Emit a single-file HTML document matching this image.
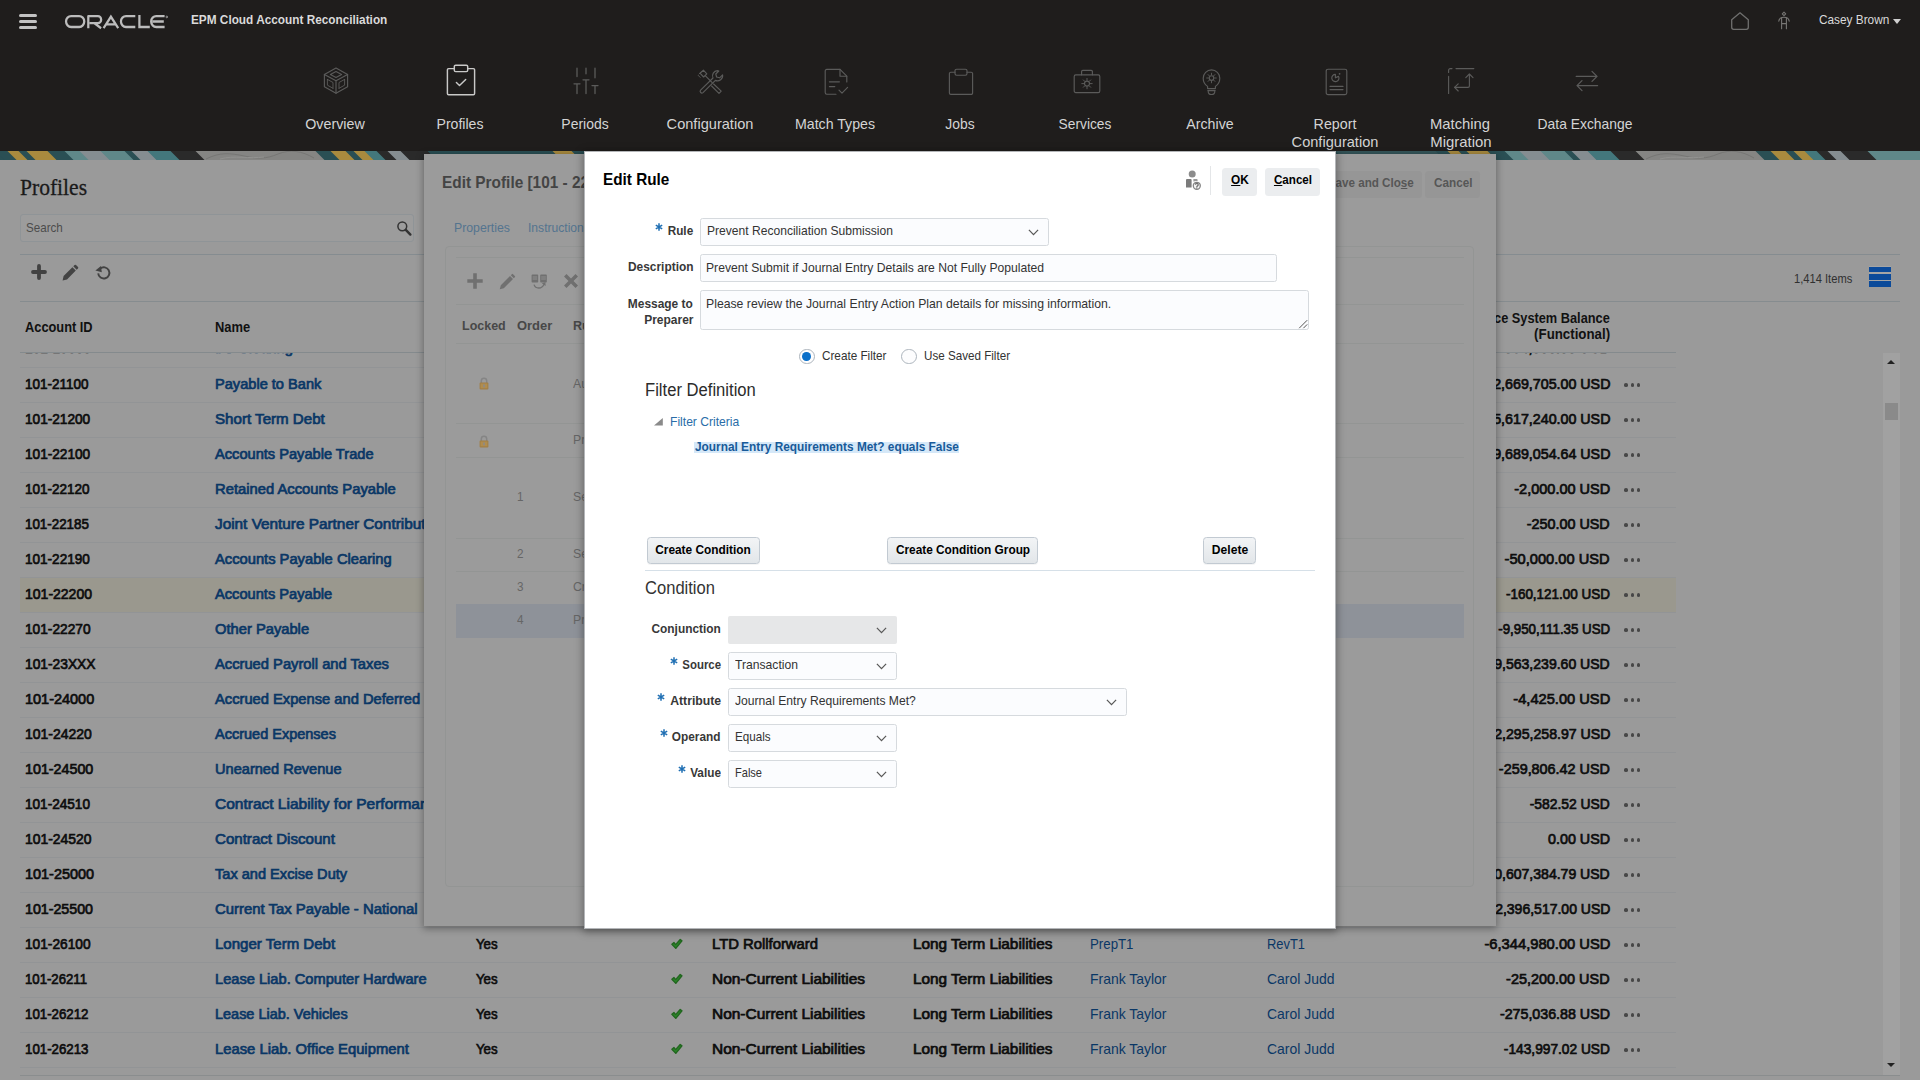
<!DOCTYPE html>
<html><head><meta charset="utf-8"><title>Edit Rule</title><style>
*{box-sizing:border-box;margin:0;padding:0}
html,body{width:1920px;height:1080px;overflow:hidden;background:#9a9a9a;font-family:"Liberation Sans",sans-serif;}
.t{position:absolute;white-space:nowrap;line-height:1;transform-origin:0 50%;}
.t.r{transform-origin:100% 50%;}
.t.c{transform-origin:50% 50%;transform:translateX(-50%);}
.b{position:absolute;}
svg{position:absolute;overflow:visible}
#hdr{position:absolute;left:0;top:0;width:1920px;height:151px;background:#1f1d1c;}
#strip{position:absolute;left:0;top:151px;width:1920px;height:9px;overflow:hidden;background:#7f8583;}
#ep{position:absolute;left:424px;top:154px;width:1072px;height:772px;background:#9b9b9b;box-shadow:0 2px 7px 1px rgba(0,0,0,.32);overflow:hidden}
#er{position:absolute;left:584px;top:151px;width:752px;height:778px;background:#fff;border:1px solid #b4b6b9;box-shadow:0 2px 8px 1px rgba(0,0,0,.35);overflow:hidden}
</style></head><body>
<div id="hdr"><div class="b" style="left:19.2px;top:13.9px;width:18px;height:3.1px;background:#c2c2c2;border-radius:1.5px;"></div>
<div class="b" style="left:19.2px;top:19.8px;width:18px;height:3.1px;background:#c2c2c2;border-radius:1.5px;"></div>
<div class="b" style="left:19.2px;top:25.8px;width:18px;height:3.1px;background:#c2c2c2;border-radius:1.5px;"></div>
<svg style="left:65px;top:15.1px" width="103" height="14" viewBox="0 0 103 13" preserveAspectRatio="none" fill="none" stroke="#bcbcbc" stroke-width="2.25">
<rect x="1.05" y="1.05" width="18.2" height="10.1" rx="5.05"></rect>
<path d="M23.3 12.2V1.05h9.6a3.25 3.25 0 0 1 0 6.5h-8.3M29.5 7.6l6.6 4.6" stroke-linejoin="round"></path>
<path d="M38.6 12.2l7.3-10.6 7.3 10.6M41.6 8.7h9.2" stroke-linejoin="miter"></path>
<path d="M70.3 1.05H61a5.05 5.05 0 0 0 0 10.1h9.3"></path>
<path d="M74.4 0v11.15h10.4"></path>
<path d="M99.6 1.05h-8.4a5.05 5.05 0 0 0 0 10.1h8.4M87.5 6.1h11.3"></path>
<circle cx="101.8" cy="1.8" r=".8" stroke-width=".7"></circle>
</svg>
<span class="t" style="top: 13.4px; font-size: 13px; color: rgb(218, 218, 218); font-weight: 700; left: 191.2px; transform: scaleX(0.908);">EPM Cloud Account Reconciliation</span>
<svg style="left:1730px;top:11px" width="20" height="20" viewBox="0 0 20 20" fill="none" stroke="#6f6f6e" stroke-width="1.3" stroke-linejoin="round"><path d="M10 1.8L18.3 8.7V16.3a2 2 0 0 1-2 2H3.7a2 2 0 0 1-2-2V8.7Z"></path></svg>
<svg style="left:1777px;top:11px" width="14" height="20" viewBox="0 0 14 20" fill="none" stroke="#777674" stroke-width="1.1" stroke-linecap="round" stroke-linejoin="round"><path d="M7 1.2l1.7 1.7L7 4.6 5.3 2.9Z"></path><path d="M1.8 10.2C2.2 7.4 4 6.3 7 6.3s4.8 1.1 5.2 3.9"></path><path d="M4.6 7v10.8M9.4 7v10.8M4.6 12.6h4.8"></path></svg>
<span class="t" style="top: 13.1px; font-size: 13px; color: rgb(218, 218, 218); left: 1818.8px; transform: scaleX(0.909);">Casey Brown</span>
<div class="b" style="left:1892.6px;top:18.6px;width:0;height:0;border-left:4.5px solid transparent;border-right:4.5px solid transparent;border-top:5.2px solid #d0d0d0"></div>
<span class="t c" style="top: 116px; font-size: 15px; color: rgb(212, 212, 212); left: 335.3px; transform: translateX(-50%) scaleX(0.952);">Overview</span>
<span class="t c" style="top: 116px; font-size: 15px; color: rgb(212, 212, 212); left: 460.3px; transform: translateX(-50%) scaleX(0.939);">Profiles</span>
<span class="t c" style="top: 116px; font-size: 15px; color: rgb(212, 212, 212); left: 585.3px; transform: translateX(-50%) scaleX(0.93);">Periods</span>
<span class="t c" style="top: 116px; font-size: 15px; color: rgb(212, 212, 212); left: 710.3px; transform: translateX(-50%) scaleX(0.973);">Configuration</span>
<span class="t c" style="top: 116px; font-size: 15px; color: rgb(212, 212, 212); left: 835.3px; transform: translateX(-50%) scaleX(0.944);">Match Types</span>
<span class="t c" style="top: 116px; font-size: 15px; color: rgb(212, 212, 212); left: 960.3px; transform: translateX(-50%) scaleX(0.925);">Jobs</span>
<span class="t c" style="top: 116px; font-size: 15px; color: rgb(212, 212, 212); left: 1085.3px; transform: translateX(-50%) scaleX(0.918);">Services</span>
<span class="t c" style="top: 116px; font-size: 15px; color: rgb(212, 212, 212); left: 1210.3px; transform: translateX(-50%) scaleX(0.945);">Archive</span>
<span class="t c" style="top: 116px; font-size: 15px; color: rgb(212, 212, 212); left: 1335.3px; transform: translateX(-50%) scaleX(0.95);">Report</span>
<span class="t c" style="top: 116px; font-size: 15px; color: rgb(212, 212, 212); left: 1460.3px; transform: translateX(-50%) scaleX(0.986);">Matching</span>
<span class="t c" style="top: 116px; font-size: 15px; color: rgb(212, 212, 212); left: 1585.3px; transform: translateX(-50%) scaleX(0.924);">Data Exchange</span>
<span class="t c" style="top: 134.3px; font-size: 15px; color: rgb(212, 212, 212); left: 1335.3px; transform: translateX(-50%) scaleX(0.973);">Configuration</span>
<span class="t c" style="top: 134.3px; font-size: 15px; color: rgb(212, 212, 212); left: 1460.5px; transform: translateX(-50%) scaleX(0.993);">Migration</span>
<svg style="left:323px;top:67.3px" width="26" height="27" viewBox="0 0 26 27" fill="none" stroke="#5b5b5a" stroke-width="1.15" stroke-linejoin="round" stroke-linecap="round"><path d="M13 1L24.6 7.4V19.8L13 26.2 1.4 19.8V7.4Z"></path><path d="M1.4 7.4L13 13.8 24.6 7.4M13 13.8V26.2"></path><path d="M13 4.6L18.6 7.6 13 10.6 7.4 7.6Z"></path><path d="M4.4 12.4v5.8l5.6 3.1M21.6 12.4v5.8l-5.6 3.1M4.4 12.4l5.6 3.1v5.8M21.6 12.4l-5.6 3.1v5.8" stroke-width=".9"></path></svg>
<svg style="left:446px;top:64.3px" width="30" height="32" viewBox="0 0 30 32" fill="none" stroke="#c9c9c8" stroke-width="1.45" stroke-linejoin="round" stroke-linecap="round"><path d="M8.3 4.6H2.6a1.2 1.2 0 0 0-1.2 1.2V29.5a1.2 1.2 0 0 0 1.2 1.2H27.4a1.2 1.2 0 0 0 1.2-1.2V5.8a1.2 1.2 0 0 0-1.2-1.2H21.7"></path><rect x="8.3" y="1.2" width="13.4" height="6.4" rx="1.4"></rect><path d="M10.4 18.6l3.1 3 6.2-6.2"></path></svg>
<svg style="left:573px;top:67.3px" width="26" height="28" viewBox="0 0 26 28" fill="none" stroke="#5b5b5a" stroke-width="1.3" stroke-linejoin="round" stroke-linecap="round"><path d="M4 1.2v8.4M1 16.8h6M4 16.8v9.8M13 1.2v5.6M10 12.8h6M13 12.8v13.8M22 1.2v9.6M19 18.6h6M22 18.6v8"></path></svg>
<svg style="left:697px;top:68.8px" width="28" height="25" viewBox="0 0 28 25" fill="none" stroke="#5b5b5a" stroke-width="1.15" stroke-linejoin="round" stroke-linecap="round"><path d="M20.4 1.6a5.2 5.2 0 0 0-4.4 7.4L3.6 21.2a1.7 1.7 0 0 0 2.4 2.4L18.4 11.4a5.2 5.2 0 0 0 7.2-5.6l-3 3-3-.8-.8-3 3-3a5.2 5.2 0 0 0-1.4-.4Z"></path><path d="M3 4.2l3.4-3 3.4 3.6-3.2 3.2ZM8.2 6.6l7 7M16.6 15l7.6 7.2-2.2 2.2-7.4-7.4"></path><path d="M1.2 6.4l2 2M4 3l-2 2" stroke-width=".9"></path></svg>
<svg style="left:823px;top:67.8px" width="27" height="28" viewBox="0 0 27 28" fill="none" stroke="#5b5b5a" stroke-width="1.15" stroke-linejoin="round" stroke-linecap="round"><path d="M17 1.4H3.8A1.6 1.6 0 0 0 2.2 3V24.6a1.6 1.6 0 0 0 1.6 1.6H13"></path><path d="M17 1.4l6.8 6.8V14"></path><path d="M17 1.4V8.2h6.8"></path><path d="M6.4 13.8h10M6.4 18.6h5.4"></path><path d="M16 22.2l3 3 5.6-5.8"></path></svg>
<svg style="left:948px;top:67.8px" width="26" height="28" viewBox="0 0 26 28" fill="none" stroke="#5b5b5a" stroke-width="1.15" stroke-linejoin="round" stroke-linecap="round"><path d="M7 4.2H2.8A1.4 1.4 0 0 0 1.4 5.6V25a1.4 1.4 0 0 0 1.4 1.4H23.2A1.4 1.4 0 0 0 24.6 25V5.6a1.4 1.4 0 0 0-1.4-1.4H19"></path><rect x="7" y="1.2" width="12" height="6" rx="1.6"></rect></svg>
<svg style="left:1072.5px;top:68.8px" width="28" height="25" viewBox="0 0 28 25" fill="none" stroke="#5b5b5a" stroke-width="1.15" stroke-linejoin="round" stroke-linecap="round"><rect x="1.2" y="5.8" width="25.6" height="17.8" rx="1.6"></rect><path d="M8.6 5.8V2.6a1.2 1.2 0 0 1 1.2-1.2h8.4a1.2 1.2 0 0 1 1.2 1.2V5.8"></path><circle cx="14" cy="14.6" r="2.5"></circle><path d="M14 9.4v2M14 17.8v2M8.8 14.6h2M17.2 14.6h2M10.3 10.9l1.4 1.4M16.3 16.9l1.4 1.4M17.7 10.9l-1.4 1.4M11.7 16.9l-1.4 1.4" stroke-width="1"></path></svg>
<svg style="left:1201.5px;top:67.8px" width="19" height="28" viewBox="0 0 19 28" fill="none" stroke="#5b5b5a" stroke-width="1.15" stroke-linejoin="round" stroke-linecap="round"><path d="M5.6 18.4C3 16.6 1.2 13.6 1.2 10.2a8.3 8.3 0 0 1 16.6 0c0 3.4-1.8 6.4-4.4 8.2v2.2H5.6Z"></path><path d="M5.8 22.6h7.4M6.2 23.2a3.3 3.3 0 0 0 6.6 0"></path><circle cx="9.5" cy="10" r="2.3"></circle><path d="M9.5 5.2v1.6M9.5 13.2v1.6M4.7 10h1.6M12.7 10h1.6M6.1 6.6l1.2 1.2M11.7 12.2l1.2 1.2M12.9 6.6l-1.2 1.2M7.3 12.2l-1.2 1.2" stroke-width=".95"></path></svg>
<svg style="left:1324.5px;top:67.8px" width="23" height="28" viewBox="0 0 23 28" fill="none" stroke="#5b5b5a" stroke-width="1.15" stroke-linejoin="round" stroke-linecap="round"><rect x="1.2" y="1.2" width="20.6" height="25.4" rx="1.8"></rect><path d="M13.6 8.4a3.6 3.6 0 1 1-3.2-2v3.4Z"></path><circle cx="14.6" cy="5.8" r=".9" fill="#5b5b5a" stroke="none"></circle><path d="M5 18.4h13M5 21.6h13"></path></svg>
<svg style="left:1446.5px;top:67.3px" width="29" height="28" viewBox="0 0 29 28" fill="none" stroke="#5b5b5a" stroke-width="1.15" stroke-linejoin="round" stroke-linecap="round"><path d="M1.6 9.4V26.4"></path><path d="M1.6 5.4V3.2A1.6 1.6 0 0 1 3.2 1.6H5"></path><path d="M9 1.6H26.8"></path><path d="M22.4 7.2V19a1.4 1.4 0 0 1-1.4 1.4H7.6"></path><path d="M18.8 10.6l3.6-3.6 3.6 3.6M11.2 16.8l-3.6 3.6 3.6 3.6"></path></svg>
<svg style="left:1574.5px;top:70.3px" width="24" height="22" viewBox="0 0 24 22" fill="none" stroke="#5b5b5a" stroke-width="1.25" stroke-linejoin="round" stroke-linecap="round"><path d="M1.2 6.4H22M17 1.4l5 5-5 5"></path><path d="M22.6 15.6H2M7 10.6l-5 5 5 5"></path></svg></div>
<div id="strip"><div class="b" style="left:0;top:0;width:1920px;height:9px;background:#2a4f54"></div>
<div class="b" style="left:0px;top:0;width:13px;height:9px;background:#2a4f54;transform:skewX(45deg)"></div>
<div class="b" style="left:12px;top:0;width:12px;height:9px;background:#a98a3e;transform:skewX(45deg)"></div>
<div class="b" style="left:23px;top:0;width:9px;height:9px;background:#2a4f54;transform:skewX(45deg)"></div>
<div class="b" style="left:31px;top:0;width:22px;height:9px;background:#a98a3e;transform:skewX(45deg)"></div>
<div class="b" style="left:52px;top:0;width:18px;height:9px;background:#2a4f54;transform:skewX(45deg)"></div>
<div class="b" style="left:69px;top:0;width:16px;height:9px;background:#5f8889;transform:skewX(45deg)"></div>
<div class="b" style="left:84px;top:0;width:22px;height:9px;background:#858d91;transform:skewX(45deg)"></div>
<div class="b" style="left:105px;top:0;width:25px;height:9px;background:#5f8889;transform:skewX(45deg)"></div>
<div class="b" style="left:129px;top:0;width:8px;height:9px;background:#2a4f54;transform:skewX(45deg)"></div>
<div class="b" style="left:136px;top:0;width:17px;height:9px;background:#858d91;transform:skewX(45deg)"></div>
<div class="b" style="left:152px;top:0;width:24px;height:9px;background:#43777c;transform:skewX(45deg)"></div>
<div class="b" style="left:175px;top:0;width:26px;height:9px;background:#2a2a2a;transform:skewX(45deg)"></div>
<div class="b" style="left:200px;top:0;width:121px;height:9px;background:#858583;transform:skewX(45deg)"></div>
<div class="b" style="left:320px;top:0;width:16px;height:9px;background:#2a4f54;transform:skewX(45deg)"></div>
<div class="b" style="left:335px;top:0;width:16px;height:9px;background:#a98a3e;transform:skewX(45deg)"></div>
<div class="b" style="left:350px;top:0;width:9px;height:9px;background:#2a4f54;transform:skewX(45deg)"></div>
<div class="b" style="left:358px;top:0;width:12px;height:9px;background:#a98a3e;transform:skewX(45deg)"></div>
<div class="b" style="left:369px;top:0;width:13px;height:9px;background:#43777c;transform:skewX(45deg)"></div>
<div class="b" style="left:381px;top:0;width:12px;height:9px;background:#2a2a2a;transform:skewX(45deg)"></div>
<div class="b" style="left:392px;top:0;width:14px;height:9px;background:#858d91;transform:skewX(45deg)"></div>
<div class="b" style="left:405px;top:0;width:28px;height:9px;background:#2a2a2a;transform:skewX(45deg)"></div>
<div class="b" style="left:432px;top:0;width:126px;height:9px;background:#2a4f54;transform:skewX(45deg)"></div>
<div class="b" style="left:557px;top:0;width:20px;height:9px;background:#a98a3e;transform:skewX(45deg)"></div>
<div class="b" style="left:576px;top:0;width:765px;height:9px;background:#2a4f54;transform:skewX(45deg)"></div>
<div class="b" style="left:1340px;top:0;width:101px;height:9px;background:#35565a;transform:skewX(45deg)"></div>
<div class="b" style="left:1440px;top:0;width:13px;height:9px;background:#2a4f54;transform:skewX(45deg)"></div>
<div class="b" style="left:1452px;top:0;width:12px;height:9px;background:#a98a3e;transform:skewX(45deg)"></div>
<div class="b" style="left:1463px;top:0;width:9px;height:9px;background:#2a4f54;transform:skewX(45deg)"></div>
<div class="b" style="left:1471px;top:0;width:22px;height:9px;background:#a98a3e;transform:skewX(45deg)"></div>
<div class="b" style="left:1492px;top:0;width:18px;height:9px;background:#2a4f54;transform:skewX(45deg)"></div>
<div class="b" style="left:1509px;top:0;width:16px;height:9px;background:#5f8889;transform:skewX(45deg)"></div>
<div class="b" style="left:1524px;top:0;width:22px;height:9px;background:#858d91;transform:skewX(45deg)"></div>
<div class="b" style="left:1545px;top:0;width:25px;height:9px;background:#5f8889;transform:skewX(45deg)"></div>
<div class="b" style="left:1569px;top:0;width:8px;height:9px;background:#2a4f54;transform:skewX(45deg)"></div>
<div class="b" style="left:1576px;top:0;width:17px;height:9px;background:#858d91;transform:skewX(45deg)"></div>
<div class="b" style="left:1592px;top:0;width:24px;height:9px;background:#43777c;transform:skewX(45deg)"></div>
<div class="b" style="left:1615px;top:0;width:26px;height:9px;background:#2a2a2a;transform:skewX(45deg)"></div>
<div class="b" style="left:1640px;top:0;width:121px;height:9px;background:#858583;transform:skewX(45deg)"></div>
<div class="b" style="left:1760px;top:0;width:16px;height:9px;background:#2a4f54;transform:skewX(45deg)"></div>
<div class="b" style="left:1775px;top:0;width:16px;height:9px;background:#a98a3e;transform:skewX(45deg)"></div>
<div class="b" style="left:1790px;top:0;width:9px;height:9px;background:#2a4f54;transform:skewX(45deg)"></div>
<div class="b" style="left:1798px;top:0;width:12px;height:9px;background:#a98a3e;transform:skewX(45deg)"></div>
<div class="b" style="left:1809px;top:0;width:13px;height:9px;background:#43777c;transform:skewX(45deg)"></div>
<div class="b" style="left:1821px;top:0;width:12px;height:9px;background:#2a2a2a;transform:skewX(45deg)"></div>
<div class="b" style="left:1832px;top:0;width:14px;height:9px;background:#858d91;transform:skewX(45deg)"></div>
<div class="b" style="left:1845px;top:0;width:28px;height:9px;background:#2a2a2a;transform:skewX(45deg)"></div>
<div class="b" style="left:1872px;top:0;width:69px;height:9px;background:#5f8889;transform:skewX(45deg)"></div>
<svg style="left:200px;top:0" width="120" height="9" viewBox="0 0 120 9" fill="none" stroke="#767674" stroke-width="1"><path d="M6 8C20 1 30 2 44 5s22 3 34-2 24-3 36 4"></path><path d="M20 8C34 4 50 8 64 6" stroke="#929290"></path></svg>
<svg style="left:1640px;top:0" width="120" height="9" viewBox="0 0 120 9" fill="none" stroke="#767674" stroke-width="1"><path d="M6 8C20 1 30 2 44 5s22 3 34-2 24-3 36 4"></path><path d="M20 8C34 4 50 8 64 6" stroke="#929290"></path></svg></div>
<div id="page"><span class="t" style="top: 177.2px; font-size: 22.8px; color: rgb(26, 26, 26); font-family: &quot;Liberation Serif&quot;, serif; -webkit-text-stroke: 0.3px rgb(26, 26, 26); left: 20.4px; transform: scaleX(0.945);">Profiles</span>
<div class="b" style="left:20px;top:214px;width:394px;height:28px;background:#9c9c9c;border:1px solid #8f9497;border-radius:3px;"></div>
<span class="t" style="top: 221px; font-size: 13px; color: rgb(76, 76, 76); left: 26px; transform: scaleX(0.893);">Search</span>
<svg style="left:396px;top:220px" width="17" height="17" viewBox="0 0 17 17" fill="none"><circle cx="6.3" cy="6.3" r="4.4" stroke="#333" stroke-width="1.5"></circle><path d="M9.8 9.8l4.6 4.8" stroke="#333" stroke-width="2.4" stroke-linecap="round"></path></svg>
<div class="b" style="left:20px;top:254px;width:1880px;height:1px;background:#858c90;"></div>
<svg style="left:31px;top:264px" width="16" height="16" viewBox="0 0 16 16" stroke="#424242" stroke-width="3.8" stroke-linecap="round"><path d="M8 2v12M2 8h12"></path></svg>
<svg style="left:62.3px;top:263.5px" width="17" height="17" viewBox="0 0 17 17"><path d="M1.6 12L10.4 3.2l3.4 3.4L5 15.4.6 16.4zM11.3 2.3l1.3-1.3a1 1 0 0 1 1.4 0l2 2a1 1 0 0 1 0 1.4l-1.3 1.3z" fill="#434343"></path></svg>
<svg style="left:95px;top:264.5px" width="17" height="16" viewBox="0 0 17 16" fill="none"><path d="M5.2 3.6A5.6 5.6 0 1 1 3.2 8.4" stroke="#424242" stroke-width="1.9"></path><path d="M.4 5.4L6 1l.8 6.2z" fill="#424242"></path></svg>
<div class="b" style="left:20px;top:301px;width:1880px;height:1px;background:#868c8f;"></div>
<span class="t" style="top: 272.1px; font-size: 13px; color: rgb(48, 48, 48); left: 1793.8px; transform: scaleX(0.858);">1,414 Items</span>
<div class="b" style="left:1868.6px;top:266px;width:22.8px;height:21.2px;background:#a5a5a5;"></div>
<div class="b" style="left:1869px;top:266.5px;width:22px;height:5.9px;background:#0b4a9a;"></div>
<div class="b" style="left:1869px;top:273.65px;width:22px;height:5.9px;background:#0b4a9a;"></div>
<div class="b" style="left:1869px;top:280.8px;width:22px;height:5.9px;background:#0b4a9a;"></div>
<span class="t" style="top: 319.6px; font-size: 14px; color: rgb(17, 17, 17); font-weight: 700; left: 25px; transform: scaleX(0.915);">Account ID</span>
<span class="t" style="top: 319.6px; font-size: 14px; color: rgb(17, 17, 17); font-weight: 700; left: 215.4px; transform: scaleX(0.923);">Name</span>
<span class="t r" style="top: 310.6px; font-size: 14px; color: rgb(17, 17, 17); font-weight: 700; right: 310px; transform: scaleX(0.912);">Source System Balance</span>
<span class="t r" style="top: 327.4px; font-size: 14px; color: rgb(17, 17, 17); font-weight: 700; right: 310px; transform: scaleX(0.949);">(Functional)</span>
<div class="b" style="left:20px;top:352px;width:1656px;height:1px;background:#848a8d;"></div>
<div class="b" style="left:0;top:353px;width:1700px;height:14px;overflow:hidden"><span class="t" style="top: -12.6px; font-size: 15px; color: rgb(13, 13, 13); -webkit-text-stroke: 0.72px rgb(13, 13, 13); left: 25px; transform: scaleX(0.92);">101-19000</span><span class="t" style="top: -12.6px; font-size: 15px; color: rgb(10, 55, 102); -webkit-text-stroke: 0.72px rgb(10, 55, 102); left: 215.4px; transform: scaleX(0.985);">I/C Clearing</span><span class="t r" style="top: -12.6px; font-size: 15px; color: rgb(13, 13, 13); -webkit-text-stroke: 0.72px rgb(13, 13, 13); right: 90px; transform: scaleX(0.949);">-564,000.00 USD</span></div>
<div class="b" style="left:20px;top:577px;width:1656px;height:35px;background:#9a988e;"></div>
<div class="b" style="left:20px;top:367px;width:1656px;height:1px;background:#929496;"></div>
<span class="t" style="top: 375.7px; font-size: 15px; color: rgb(13, 13, 13); -webkit-text-stroke: 0.72px rgb(13, 13, 13); left: 25px; transform: scaleX(0.898);">101-21100</span>
<span class="t" style="top: 375.7px; font-size: 15px; color: rgb(10, 55, 102); -webkit-text-stroke: 0.72px rgb(10, 55, 102); left: 215.3px; transform: scaleX(0.973);">Payable to Bank</span>
<span class="t r" style="top: 375.7px; font-size: 15px; color: rgb(13, 13, 13); -webkit-text-stroke: 0.72px rgb(13, 13, 13); right: 310px; transform: scaleX(0.95);">-2,669,705.00 USD</span>
<div class="b" style="left:1624.2px;top:382.95px;width:3.7px;height:3.7px;background:#474747;border-radius:50%;"></div><div class="b" style="left:1630.5px;top:382.95px;width:3.7px;height:3.7px;background:#474747;border-radius:50%;"></div><div class="b" style="left:1636.8px;top:382.95px;width:3.7px;height:3.7px;background:#474747;border-radius:50%;"></div>
<div class="b" style="left:20px;top:402px;width:1656px;height:1px;background:#929496;"></div>
<span class="t" style="top: 410.7px; font-size: 15px; color: rgb(13, 13, 13); -webkit-text-stroke: 0.72px rgb(13, 13, 13); left: 25px; transform: scaleX(0.909);">101-21200</span>
<span class="t" style="top: 410.7px; font-size: 15px; color: rgb(10, 55, 102); -webkit-text-stroke: 0.72px rgb(10, 55, 102); left: 215.3px; transform: scaleX(1.008);">Short Term Debt</span>
<span class="t r" style="top: 410.7px; font-size: 15px; color: rgb(13, 13, 13); -webkit-text-stroke: 0.72px rgb(13, 13, 13); right: 310px; transform: scaleX(0.95);">-5,617,240.00 USD</span>
<div class="b" style="left:1624.2px;top:417.95px;width:3.7px;height:3.7px;background:#474747;border-radius:50%;"></div><div class="b" style="left:1630.5px;top:417.95px;width:3.7px;height:3.7px;background:#474747;border-radius:50%;"></div><div class="b" style="left:1636.8px;top:417.95px;width:3.7px;height:3.7px;background:#474747;border-radius:50%;"></div>
<div class="b" style="left:20px;top:437px;width:1656px;height:1px;background:#929496;"></div>
<span class="t" style="top: 445.7px; font-size: 15px; color: rgb(13, 13, 13); -webkit-text-stroke: 0.72px rgb(13, 13, 13); left: 25px; transform: scaleX(0.909);">101-22100</span>
<span class="t" style="top: 445.7px; font-size: 15px; color: rgb(10, 55, 102); -webkit-text-stroke: 0.72px rgb(10, 55, 102); left: 215.3px; transform: scaleX(0.975);">Accounts Payable Trade</span>
<span class="t r" style="top: 445.7px; font-size: 15px; color: rgb(13, 13, 13); -webkit-text-stroke: 0.72px rgb(13, 13, 13); right: 310px; transform: scaleX(0.95);">-9,689,054.64 USD</span>
<div class="b" style="left:1624.2px;top:452.95px;width:3.7px;height:3.7px;background:#474747;border-radius:50%;"></div><div class="b" style="left:1630.5px;top:452.95px;width:3.7px;height:3.7px;background:#474747;border-radius:50%;"></div><div class="b" style="left:1636.8px;top:452.95px;width:3.7px;height:3.7px;background:#474747;border-radius:50%;"></div>
<div class="b" style="left:20px;top:472px;width:1656px;height:1px;background:#929496;"></div>
<span class="t" style="top: 480.7px; font-size: 15px; color: rgb(13, 13, 13); -webkit-text-stroke: 0.72px rgb(13, 13, 13); left: 25px; transform: scaleX(0.901);">101-22120</span>
<span class="t" style="top: 480.7px; font-size: 15px; color: rgb(10, 55, 102); -webkit-text-stroke: 0.72px rgb(10, 55, 102); left: 215.3px; transform: scaleX(0.985);">Retained Accounts Payable</span>
<span class="t r" style="top: 480.7px; font-size: 15px; color: rgb(13, 13, 13); -webkit-text-stroke: 0.72px rgb(13, 13, 13); right: 310px; transform: scaleX(0.967);">-2,000.00 USD</span>
<div class="b" style="left:1624.2px;top:487.95px;width:3.7px;height:3.7px;background:#474747;border-radius:50%;"></div><div class="b" style="left:1630.5px;top:487.95px;width:3.7px;height:3.7px;background:#474747;border-radius:50%;"></div><div class="b" style="left:1636.8px;top:487.95px;width:3.7px;height:3.7px;background:#474747;border-radius:50%;"></div>
<div class="b" style="left:20px;top:507px;width:1656px;height:1px;background:#929496;"></div>
<span class="t" style="top: 515.7px; font-size: 15px; color: rgb(13, 13, 13); -webkit-text-stroke: 0.72px rgb(13, 13, 13); left: 25px; transform: scaleX(0.891);">101-22185</span>
<span class="t" style="top: 515.7px; font-size: 15px; color: rgb(10, 55, 102); -webkit-text-stroke: 0.72px rgb(10, 55, 102); left: 215.3px; transform: scaleX(1.022);">Joint Venture Partner Contribution</span>
<span class="t r" style="top: 515.7px; font-size: 15px; color: rgb(13, 13, 13); -webkit-text-stroke: 0.72px rgb(13, 13, 13); right: 310px; transform: scaleX(0.957);">-250.00 USD</span>
<div class="b" style="left:1624.2px;top:522.95px;width:3.7px;height:3.7px;background:#474747;border-radius:50%;"></div><div class="b" style="left:1630.5px;top:522.95px;width:3.7px;height:3.7px;background:#474747;border-radius:50%;"></div><div class="b" style="left:1636.8px;top:522.95px;width:3.7px;height:3.7px;background:#474747;border-radius:50%;"></div>
<div class="b" style="left:20px;top:542px;width:1656px;height:1px;background:#929496;"></div>
<span class="t" style="top: 550.7px; font-size: 15px; color: rgb(13, 13, 13); -webkit-text-stroke: 0.72px rgb(13, 13, 13); left: 25px; transform: scaleX(0.903);">101-22190</span>
<span class="t" style="top: 550.7px; font-size: 15px; color: rgb(10, 55, 102); -webkit-text-stroke: 0.72px rgb(10, 55, 102); left: 215.3px; transform: scaleX(0.981);">Accounts Payable Clearing</span>
<span class="t r" style="top: 550.7px; font-size: 15px; color: rgb(13, 13, 13); -webkit-text-stroke: 0.72px rgb(13, 13, 13); right: 310px; transform: scaleX(0.976);">-50,000.00 USD</span>
<div class="b" style="left:1624.2px;top:557.95px;width:3.7px;height:3.7px;background:#474747;border-radius:50%;"></div><div class="b" style="left:1630.5px;top:557.95px;width:3.7px;height:3.7px;background:#474747;border-radius:50%;"></div><div class="b" style="left:1636.8px;top:557.95px;width:3.7px;height:3.7px;background:#474747;border-radius:50%;"></div>
<div class="b" style="left:20px;top:577px;width:1656px;height:1px;background:#929496;"></div>
<span class="t" style="top: 585.7px; font-size: 15px; color: rgb(13, 13, 13); -webkit-text-stroke: 0.72px rgb(13, 13, 13); left: 25px; transform: scaleX(0.934);">101-22200</span>
<span class="t" style="top: 585.7px; font-size: 15px; color: rgb(10, 55, 102); -webkit-text-stroke: 0.72px rgb(10, 55, 102); left: 215.3px; transform: scaleX(0.976);">Accounts Payable</span>
<span class="t r" style="top: 585.7px; font-size: 15px; color: rgb(13, 13, 13); -webkit-text-stroke: 0.72px rgb(13, 13, 13); right: 310px; transform: scaleX(0.897);">-160,121.00 USD</span>
<div class="b" style="left:1624.2px;top:592.95px;width:3.7px;height:3.7px;background:#474747;border-radius:50%;"></div><div class="b" style="left:1630.5px;top:592.95px;width:3.7px;height:3.7px;background:#474747;border-radius:50%;"></div><div class="b" style="left:1636.8px;top:592.95px;width:3.7px;height:3.7px;background:#474747;border-radius:50%;"></div>
<div class="b" style="left:20px;top:612px;width:1656px;height:1px;background:#929496;"></div>
<span class="t" style="top: 620.7px; font-size: 15px; color: rgb(13, 13, 13); -webkit-text-stroke: 0.72px rgb(13, 13, 13); left: 25px; transform: scaleX(0.913);">101-22270</span>
<span class="t" style="top: 620.7px; font-size: 15px; color: rgb(10, 55, 102); -webkit-text-stroke: 0.72px rgb(10, 55, 102); left: 215.3px; transform: scaleX(0.981);">Other Payable</span>
<span class="t r" style="top: 620.7px; font-size: 15px; color: rgb(13, 13, 13); -webkit-text-stroke: 0.72px rgb(13, 13, 13); right: 310px; transform: scaleX(0.887);">-9,950,111.35 USD</span>
<div class="b" style="left:1624.2px;top:627.95px;width:3.7px;height:3.7px;background:#474747;border-radius:50%;"></div><div class="b" style="left:1630.5px;top:627.95px;width:3.7px;height:3.7px;background:#474747;border-radius:50%;"></div><div class="b" style="left:1636.8px;top:627.95px;width:3.7px;height:3.7px;background:#474747;border-radius:50%;"></div>
<div class="b" style="left:20px;top:647px;width:1656px;height:1px;background:#929496;"></div>
<span class="t" style="top: 655.7px; font-size: 15px; color: rgb(13, 13, 13); -webkit-text-stroke: 0.72px rgb(13, 13, 13); left: 25px; transform: scaleX(0.919);">101-23XXX</span>
<span class="t" style="top: 655.7px; font-size: 15px; color: rgb(10, 55, 102); -webkit-text-stroke: 0.72px rgb(10, 55, 102); left: 215.3px; transform: scaleX(0.981);">Accrued Payroll and Taxes</span>
<span class="t r" style="top: 655.7px; font-size: 15px; color: rgb(13, 13, 13); -webkit-text-stroke: 0.72px rgb(13, 13, 13); right: 310px; transform: scaleX(0.936);">-19,563,239.60 USD</span>
<div class="b" style="left:1624.2px;top:662.95px;width:3.7px;height:3.7px;background:#474747;border-radius:50%;"></div><div class="b" style="left:1630.5px;top:662.95px;width:3.7px;height:3.7px;background:#474747;border-radius:50%;"></div><div class="b" style="left:1636.8px;top:662.95px;width:3.7px;height:3.7px;background:#474747;border-radius:50%;"></div>
<div class="b" style="left:20px;top:682px;width:1656px;height:1px;background:#929496;"></div>
<span class="t" style="top: 690.7px; font-size: 15px; color: rgb(13, 13, 13); -webkit-text-stroke: 0.72px rgb(13, 13, 13); left: 25px; transform: scaleX(0.965);">101-24000</span>
<span class="t" style="top: 690.7px; font-size: 15px; color: rgb(10, 55, 102); -webkit-text-stroke: 0.72px rgb(10, 55, 102); left: 215.3px; transform: scaleX(0.98);">Accrued Expense and Deferred</span>
<span class="t r" style="top: 690.7px; font-size: 15px; color: rgb(13, 13, 13); -webkit-text-stroke: 0.72px rgb(13, 13, 13); right: 310px; transform: scaleX(0.977);">-4,425.00 USD</span>
<div class="b" style="left:1624.2px;top:697.95px;width:3.7px;height:3.7px;background:#474747;border-radius:50%;"></div><div class="b" style="left:1630.5px;top:697.95px;width:3.7px;height:3.7px;background:#474747;border-radius:50%;"></div><div class="b" style="left:1636.8px;top:697.95px;width:3.7px;height:3.7px;background:#474747;border-radius:50%;"></div>
<div class="b" style="left:20px;top:717px;width:1656px;height:1px;background:#929496;"></div>
<span class="t" style="top: 725.7px; font-size: 15px; color: rgb(13, 13, 13); -webkit-text-stroke: 0.72px rgb(13, 13, 13); left: 25px; transform: scaleX(0.93);">101-24220</span>
<span class="t" style="top: 725.7px; font-size: 15px; color: rgb(10, 55, 102); -webkit-text-stroke: 0.72px rgb(10, 55, 102); left: 215.3px; transform: scaleX(0.967);">Accrued Expenses</span>
<span class="t r" style="top: 725.7px; font-size: 15px; color: rgb(13, 13, 13); -webkit-text-stroke: 0.72px rgb(13, 13, 13); right: 310px; transform: scaleX(0.942);">-2,295,258.97 USD</span>
<div class="b" style="left:1624.2px;top:732.95px;width:3.7px;height:3.7px;background:#474747;border-radius:50%;"></div><div class="b" style="left:1630.5px;top:732.95px;width:3.7px;height:3.7px;background:#474747;border-radius:50%;"></div><div class="b" style="left:1636.8px;top:732.95px;width:3.7px;height:3.7px;background:#474747;border-radius:50%;"></div>
<div class="b" style="left:20px;top:752px;width:1656px;height:1px;background:#929496;"></div>
<span class="t" style="top: 760.7px; font-size: 15px; color: rgb(13, 13, 13); -webkit-text-stroke: 0.72px rgb(13, 13, 13); left: 25px; transform: scaleX(0.952);">101-24500</span>
<span class="t" style="top: 760.7px; font-size: 15px; color: rgb(10, 55, 102); -webkit-text-stroke: 0.72px rgb(10, 55, 102); left: 215.3px; transform: scaleX(0.973);">Unearned Revenue</span>
<span class="t r" style="top: 760.7px; font-size: 15px; color: rgb(13, 13, 13); -webkit-text-stroke: 0.72px rgb(13, 13, 13); right: 310px; transform: scaleX(0.958);">-259,806.42 USD</span>
<div class="b" style="left:1624.2px;top:767.95px;width:3.7px;height:3.7px;background:#474747;border-radius:50%;"></div><div class="b" style="left:1630.5px;top:767.95px;width:3.7px;height:3.7px;background:#474747;border-radius:50%;"></div><div class="b" style="left:1636.8px;top:767.95px;width:3.7px;height:3.7px;background:#474747;border-radius:50%;"></div>
<div class="b" style="left:20px;top:787px;width:1656px;height:1px;background:#929496;"></div>
<span class="t" style="top: 795.7px; font-size: 15px; color: rgb(13, 13, 13); -webkit-text-stroke: 0.72px rgb(13, 13, 13); left: 25px; transform: scaleX(0.906);">101-24510</span>
<span class="t" style="top: 795.7px; font-size: 15px; color: rgb(10, 55, 102); -webkit-text-stroke: 0.72px rgb(10, 55, 102); left: 215.3px; transform: scaleX(1.033);">Contract Liability for Performance</span>
<span class="t r" style="top: 795.7px; font-size: 15px; color: rgb(13, 13, 13); -webkit-text-stroke: 0.72px rgb(13, 13, 13); right: 310px; transform: scaleX(0.923);">-582.52 USD</span>
<div class="b" style="left:1624.2px;top:802.95px;width:3.7px;height:3.7px;background:#474747;border-radius:50%;"></div><div class="b" style="left:1630.5px;top:802.95px;width:3.7px;height:3.7px;background:#474747;border-radius:50%;"></div><div class="b" style="left:1636.8px;top:802.95px;width:3.7px;height:3.7px;background:#474747;border-radius:50%;"></div>
<div class="b" style="left:20px;top:822px;width:1656px;height:1px;background:#929496;"></div>
<span class="t" style="top: 830.7px; font-size: 15px; color: rgb(13, 13, 13); -webkit-text-stroke: 0.72px rgb(13, 13, 13); left: 25px; transform: scaleX(0.927);">101-24520</span>
<span class="t" style="top: 830.7px; font-size: 15px; color: rgb(10, 55, 102); -webkit-text-stroke: 0.72px rgb(10, 55, 102); left: 215.3px; transform: scaleX(1.006);">Contract Discount</span>
<span class="t r" style="top: 830.7px; font-size: 15px; color: rgb(13, 13, 13); -webkit-text-stroke: 0.72px rgb(13, 13, 13); right: 310px; transform: scaleX(0.953);">0.00 USD</span>
<div class="b" style="left:1624.2px;top:837.95px;width:3.7px;height:3.7px;background:#474747;border-radius:50%;"></div><div class="b" style="left:1630.5px;top:837.95px;width:3.7px;height:3.7px;background:#474747;border-radius:50%;"></div><div class="b" style="left:1636.8px;top:837.95px;width:3.7px;height:3.7px;background:#474747;border-radius:50%;"></div>
<div class="b" style="left:20px;top:857px;width:1656px;height:1px;background:#929496;"></div>
<span class="t" style="top: 865.7px; font-size: 15px; color: rgb(13, 13, 13); -webkit-text-stroke: 0.72px rgb(13, 13, 13); left: 25px; transform: scaleX(0.962);">101-25000</span>
<span class="t" style="top: 865.7px; font-size: 15px; color: rgb(10, 55, 102); -webkit-text-stroke: 0.72px rgb(10, 55, 102); left: 215.3px; transform: scaleX(0.972);">Tax and Excise Duty</span>
<span class="t r" style="top: 865.7px; font-size: 15px; color: rgb(13, 13, 13); -webkit-text-stroke: 0.72px rgb(13, 13, 13); right: 310px; transform: scaleX(0.936);">-10,607,384.79 USD</span>
<div class="b" style="left:1624.2px;top:872.95px;width:3.7px;height:3.7px;background:#474747;border-radius:50%;"></div><div class="b" style="left:1630.5px;top:872.95px;width:3.7px;height:3.7px;background:#474747;border-radius:50%;"></div><div class="b" style="left:1636.8px;top:872.95px;width:3.7px;height:3.7px;background:#474747;border-radius:50%;"></div>
<div class="b" style="left:20px;top:892px;width:1656px;height:1px;background:#929496;"></div>
<span class="t" style="top: 900.7px; font-size: 15px; color: rgb(13, 13, 13); -webkit-text-stroke: 0.72px rgb(13, 13, 13); left: 25px; transform: scaleX(0.948);">101-25500</span>
<span class="t" style="top: 900.7px; font-size: 15px; color: rgb(10, 55, 102); -webkit-text-stroke: 0.72px rgb(10, 55, 102); left: 215.3px; transform: scaleX(0.993);">Current Tax Payable - National</span>
<span class="t r" style="top: 900.7px; font-size: 15px; color: rgb(13, 13, 13); -webkit-text-stroke: 0.72px rgb(13, 13, 13); right: 310px; transform: scaleX(0.934);">-2,396,517.00 USD</span>
<div class="b" style="left:1624.2px;top:907.95px;width:3.7px;height:3.7px;background:#474747;border-radius:50%;"></div><div class="b" style="left:1630.5px;top:907.95px;width:3.7px;height:3.7px;background:#474747;border-radius:50%;"></div><div class="b" style="left:1636.8px;top:907.95px;width:3.7px;height:3.7px;background:#474747;border-radius:50%;"></div>
<div class="b" style="left:20px;top:927px;width:1656px;height:1px;background:#929496;"></div>
<span class="t" style="top: 935.7px; font-size: 15px; color: rgb(13, 13, 13); -webkit-text-stroke: 0.72px rgb(13, 13, 13); left: 25px; transform: scaleX(0.913);">101-26100</span>
<span class="t" style="top: 935.7px; font-size: 15px; color: rgb(10, 55, 102); -webkit-text-stroke: 0.72px rgb(10, 55, 102); left: 215.3px; transform: scaleX(1.003);">Longer Term Debt</span>
<span class="t r" style="top: 935.7px; font-size: 15px; color: rgb(13, 13, 13); -webkit-text-stroke: 0.72px rgb(13, 13, 13); right: 310px; transform: scaleX(0.981);">-6,344,980.00 USD</span>
<div class="b" style="left:1624.2px;top:942.95px;width:3.7px;height:3.7px;background:#474747;border-radius:50%;"></div><div class="b" style="left:1630.5px;top:942.95px;width:3.7px;height:3.7px;background:#474747;border-radius:50%;"></div><div class="b" style="left:1636.8px;top:942.95px;width:3.7px;height:3.7px;background:#474747;border-radius:50%;"></div>
<span class="t" style="top: 935.7px; font-size: 15px; color: rgb(13, 13, 13); -webkit-text-stroke: 0.72px rgb(13, 13, 13); left: 475.6px; transform: scaleX(0.882);">Yes</span>
<svg style="left:671px;top:939.3000000000001px" width="11.6" height="9.8" viewBox="0 0 14 12"><path d="M1 6.5l2.6-2.1 2 2.5L11.2.7l2.1 1.5-7.5 9.3z" fill="#2a8628" stroke="#22661f" stroke-width="1.7" stroke-linejoin="round"></path></svg>
<span class="t" style="top: 935.7px; font-size: 15px; color: rgb(13, 13, 13); -webkit-text-stroke: 0.72px rgb(13, 13, 13); left: 712px; transform: scaleX(0.988);">LTD Rollforward</span>
<span class="t" style="top: 935.7px; font-size: 15px; color: rgb(13, 13, 13); -webkit-text-stroke: 0.72px rgb(13, 13, 13); left: 913px; transform: scaleX(1.022);">Long Term Liabilities</span>
<span class="t" style="top: 935.7px; font-size: 15px; color: rgb(10, 55, 102); left: 1090px; transform: scaleX(0.884);">PrepT1</span>
<span class="t" style="top: 935.7px; font-size: 15px; color: rgb(10, 55, 102); left: 1267px; transform: scaleX(0.86);">RevT1</span>
<div class="b" style="left:20px;top:962px;width:1656px;height:1px;background:#929496;"></div>
<span class="t" style="top: 970.7px; font-size: 15px; color: rgb(13, 13, 13); -webkit-text-stroke: 0.72px rgb(13, 13, 13); left: 25px; transform: scaleX(0.878);">101-26211</span>
<span class="t" style="top: 970.7px; font-size: 15px; color: rgb(10, 55, 102); -webkit-text-stroke: 0.72px rgb(10, 55, 102); left: 215.3px; transform: scaleX(0.976);">Lease Liab. Computer Hardware</span>
<span class="t r" style="top: 970.7px; font-size: 15px; color: rgb(13, 13, 13); -webkit-text-stroke: 0.72px rgb(13, 13, 13); right: 310px; transform: scaleX(0.962);">-25,200.00 USD</span>
<div class="b" style="left:1624.2px;top:977.95px;width:3.7px;height:3.7px;background:#474747;border-radius:50%;"></div><div class="b" style="left:1630.5px;top:977.95px;width:3.7px;height:3.7px;background:#474747;border-radius:50%;"></div><div class="b" style="left:1636.8px;top:977.95px;width:3.7px;height:3.7px;background:#474747;border-radius:50%;"></div>
<span class="t" style="top: 970.7px; font-size: 15px; color: rgb(13, 13, 13); -webkit-text-stroke: 0.72px rgb(13, 13, 13); left: 475.6px; transform: scaleX(0.882);">Yes</span>
<svg style="left:671px;top:974.3000000000001px" width="11.6" height="9.8" viewBox="0 0 14 12"><path d="M1 6.5l2.6-2.1 2 2.5L11.2.7l2.1 1.5-7.5 9.3z" fill="#2a8628" stroke="#22661f" stroke-width="1.7" stroke-linejoin="round"></path></svg>
<span class="t" style="top: 970.7px; font-size: 15px; color: rgb(13, 13, 13); -webkit-text-stroke: 0.72px rgb(13, 13, 13); left: 712px; transform: scaleX(1.031);">Non-Current Liabilities</span>
<span class="t" style="top: 970.7px; font-size: 15px; color: rgb(13, 13, 13); -webkit-text-stroke: 0.72px rgb(13, 13, 13); left: 913px; transform: scaleX(1.022);">Long Term Liabilities</span>
<span class="t" style="top: 970.7px; font-size: 15px; color: rgb(10, 55, 102); left: 1090px; transform: scaleX(0.93);">Frank Taylor</span>
<span class="t" style="top: 970.7px; font-size: 15px; color: rgb(10, 55, 102); left: 1267px; transform: scaleX(0.93);">Carol Judd</span>
<div class="b" style="left:20px;top:997px;width:1656px;height:1px;background:#929496;"></div>
<span class="t" style="top: 1005.7px; font-size: 15px; color: rgb(13, 13, 13); -webkit-text-stroke: 0.72px rgb(13, 13, 13); left: 25px; transform: scaleX(0.885);">101-26212</span>
<span class="t" style="top: 1005.7px; font-size: 15px; color: rgb(10, 55, 102); -webkit-text-stroke: 0.72px rgb(10, 55, 102); left: 215.3px; transform: scaleX(0.964);">Lease Liab. Vehicles</span>
<span class="t r" style="top: 1005.7px; font-size: 15px; color: rgb(13, 13, 13); -webkit-text-stroke: 0.72px rgb(13, 13, 13); right: 310px; transform: scaleX(0.949);">-275,036.88 USD</span>
<div class="b" style="left:1624.2px;top:1012.95px;width:3.7px;height:3.7px;background:#474747;border-radius:50%;"></div><div class="b" style="left:1630.5px;top:1012.95px;width:3.7px;height:3.7px;background:#474747;border-radius:50%;"></div><div class="b" style="left:1636.8px;top:1012.95px;width:3.7px;height:3.7px;background:#474747;border-radius:50%;"></div>
<span class="t" style="top: 1005.7px; font-size: 15px; color: rgb(13, 13, 13); -webkit-text-stroke: 0.72px rgb(13, 13, 13); left: 475.6px; transform: scaleX(0.882);">Yes</span>
<svg style="left:671px;top:1009.3000000000001px" width="11.6" height="9.8" viewBox="0 0 14 12"><path d="M1 6.5l2.6-2.1 2 2.5L11.2.7l2.1 1.5-7.5 9.3z" fill="#2a8628" stroke="#22661f" stroke-width="1.7" stroke-linejoin="round"></path></svg>
<span class="t" style="top: 1005.7px; font-size: 15px; color: rgb(13, 13, 13); -webkit-text-stroke: 0.72px rgb(13, 13, 13); left: 712px; transform: scaleX(1.031);">Non-Current Liabilities</span>
<span class="t" style="top: 1005.7px; font-size: 15px; color: rgb(13, 13, 13); -webkit-text-stroke: 0.72px rgb(13, 13, 13); left: 913px; transform: scaleX(1.022);">Long Term Liabilities</span>
<span class="t" style="top: 1005.7px; font-size: 15px; color: rgb(10, 55, 102); left: 1090px; transform: scaleX(0.93);">Frank Taylor</span>
<span class="t" style="top: 1005.7px; font-size: 15px; color: rgb(10, 55, 102); left: 1267px; transform: scaleX(0.93);">Carol Judd</span>
<div class="b" style="left:20px;top:1032px;width:1656px;height:1px;background:#929496;"></div>
<span class="t" style="top: 1040.7px; font-size: 15px; color: rgb(13, 13, 13); -webkit-text-stroke: 0.72px rgb(13, 13, 13); left: 25px; transform: scaleX(0.885);">101-26213</span>
<span class="t" style="top: 1040.7px; font-size: 15px; color: rgb(10, 55, 102); -webkit-text-stroke: 0.72px rgb(10, 55, 102); left: 215.3px; transform: scaleX(0.986);">Lease Liab. Office Equipment</span>
<span class="t r" style="top: 1040.7px; font-size: 15px; color: rgb(13, 13, 13); -webkit-text-stroke: 0.72px rgb(13, 13, 13); right: 310px; transform: scaleX(0.915);">-143,997.02 USD</span>
<div class="b" style="left:1624.2px;top:1047.95px;width:3.7px;height:3.7px;background:#474747;border-radius:50%;"></div><div class="b" style="left:1630.5px;top:1047.95px;width:3.7px;height:3.7px;background:#474747;border-radius:50%;"></div><div class="b" style="left:1636.8px;top:1047.95px;width:3.7px;height:3.7px;background:#474747;border-radius:50%;"></div>
<span class="t" style="top: 1040.7px; font-size: 15px; color: rgb(13, 13, 13); -webkit-text-stroke: 0.72px rgb(13, 13, 13); left: 475.6px; transform: scaleX(0.882);">Yes</span>
<svg style="left:671px;top:1044.3px" width="11.6" height="9.8" viewBox="0 0 14 12"><path d="M1 6.5l2.6-2.1 2 2.5L11.2.7l2.1 1.5-7.5 9.3z" fill="#2a8628" stroke="#22661f" stroke-width="1.7" stroke-linejoin="round"></path></svg>
<span class="t" style="top: 1040.7px; font-size: 15px; color: rgb(13, 13, 13); -webkit-text-stroke: 0.72px rgb(13, 13, 13); left: 712px; transform: scaleX(1.031);">Non-Current Liabilities</span>
<span class="t" style="top: 1040.7px; font-size: 15px; color: rgb(13, 13, 13); -webkit-text-stroke: 0.72px rgb(13, 13, 13); left: 913px; transform: scaleX(1.022);">Long Term Liabilities</span>
<span class="t" style="top: 1040.7px; font-size: 15px; color: rgb(10, 55, 102); left: 1090px; transform: scaleX(0.93);">Frank Taylor</span>
<span class="t" style="top: 1040.7px; font-size: 15px; color: rgb(10, 55, 102); left: 1267px; transform: scaleX(0.93);">Carol Judd</span>
<div class="b" style="left:20px;top:1067px;width:1656px;height:1px;background:#929496;"></div>
<div class="b" style="left:20px;top:1075px;width:1880px;height:1px;background:#8a8d8e;"></div>
<div class="b" style="left:1883px;top:353px;width:17px;height:722px;background:#a1a1a1;"></div>
<div class="b" style="left:1885px;top:403px;width:13px;height:17px;background:#8a8a8a;"></div>
<div class="b" style="left:1887px;top:360px;width:0;height:0;border-left:4px solid transparent;border-right:4px solid transparent;border-bottom:4.5px solid #222"></div>
<div class="b" style="left:1887px;top:1063px;width:0;height:0;border-left:4px solid transparent;border-right:4px solid transparent;border-top:4.5px solid #222"></div></div>
<div id="ep"></div><div id="epc"><span class="t" style="top: 173.7px; font-size: 17px; color: rgb(68, 68, 68); font-weight: 700; left: 442.3px; transform: scaleX(0.905);">Edit Profile [101 - 22200]</span>
<span class="t" style="top: 220.6px; font-size: 13px; color: rgb(84, 116, 143); left: 454px; transform: scaleX(0.945);">Properties</span>
<span class="t" style="top: 220.6px; font-size: 13px; color: rgb(84, 116, 143); left: 528px; transform: scaleX(0.93);">Instructions</span>
<div class="b" style="left:1322px;top:171.2px;width:100px;height:27px;background:#969696;border-radius:3.5px;"></div>
<span class="t r" style="top: 176.25px; font-size: 13.5px; color: rgb(86, 86, 86); font-weight: 700; right: 506.2px; transform: scaleX(0.862);">Save and Clo<span style="text-decoration:underline;text-decoration-thickness:1px;text-underline-offset:1px">s</span>e</span>
<div class="b" style="left:1425.4px;top:171.2px;width:54.4px;height:27px;background:#969696;border-radius:3.5px;"></div>
<span class="t" style="top: 176.25px; font-size: 13.5px; color: rgb(86, 86, 86); font-weight: 700; left: 1433.8px; transform: scaleX(0.869);">Cancel</span>
<div class="b" style="left:445px;top:246.2px;width:1029.4px;height:640.4px;border:1px solid #939594;border-radius:4px;"></div>
<div class="b" style="left:456px;top:257px;width:1008px;height:1px;background:#939594;"></div>
<div class="b" style="left:456px;top:304px;width:1008px;height:1px;background:#939594;"></div>
<div class="b" style="left:456px;top:343px;width:1008px;height:1px;background:#939594;"></div>
<div class="b" style="left:456px;top:423px;width:1008px;height:1px;background:#939594;"></div>
<div class="b" style="left:456px;top:456.5px;width:1008px;height:1px;background:#939594;"></div>
<div class="b" style="left:456px;top:538px;width:1008px;height:1px;background:#939594;"></div>
<div class="b" style="left:456px;top:570.5px;width:1008px;height:1px;background:#939594;"></div>
<div class="b" style="left:456px;top:604px;width:1008px;height:33.6px;background:#8e9299;"></div>
<svg style="left:467px;top:273px" width="16" height="16" viewBox="0 0 16 16"><path d="M6.2 0.3h3.6v5.9h5.9v3.6H9.8v5.9H6.2V9.8H0.3V6.2h5.9z" fill="#707070"></path></svg>
<svg style="left:498.5px;top:272.5px" width="17" height="17" viewBox="0 0 17 17"><path d="M1.8 12.2L11 3l3 3-9.2 9.2-4 1zM11.8 2.2l1-1a.9.9 0 0 1 1.3 0l1.7 1.7a.9.9 0 0 1 0 1.3l-1 1z" fill="#707070"></path></svg>
<svg style="left:531px;top:273.5px" width="17" height="16" viewBox="0 0 17 16" fill="none"><rect x=".6" y=".6" width="6.6" height="8" rx=".8" fill="#707070"></rect><rect x="9.2" y=".6" width="6.6" height="8" rx=".8" fill="#707070"></rect><path d="M1.6 3h4.6M1.6 5h4.6M10.2 3h4.6M10.2 5h4.6" stroke="#9b9b9b" stroke-width=".8"></path><path d="M3 10.6c1.6 4.6 8 4.6 10-.4" stroke="#707070" stroke-width="1.3"></path><path d="M10.8 9.2l3.6-1 .2 3.8z" fill="#707070"></path></svg>
<svg style="left:564px;top:274px" width="14" height="14" viewBox="0 0 14 14"><path d="M2.5 0L7 4.5 11.5 0 14 2.5 9.5 7 14 11.5 11.5 14 7 9.5 2.5 14 0 11.5 4.5 7 0 2.5z" fill="#707070"></path></svg>
<span class="t" style="top: 318.55px; font-size: 13.5px; color: rgb(72, 72, 72); font-weight: 700; left: 461.8px; transform: scaleX(0.925);">Locked</span>
<span class="t" style="top: 318.55px; font-size: 13.5px; color: rgb(72, 72, 72); font-weight: 700; left: 517.3px; transform: scaleX(0.96);">Order</span>
<span class="t" style="top: 318.55px; font-size: 13.5px; color: rgb(72, 72, 72); font-weight: 700; left: 573.3px; transform: scaleX(0.93);">Rule</span>
<svg style="left:478.5px;top:377.1px" width="10" height="13" viewBox="0 0 10 13"><path d="M2.3 6V3.9a2.7 2.7 0 0 1 5.4 0V6" fill="none" stroke="#858585" stroke-width="1.5"></path><rect x=".6" y="5.4" width="8.8" height="7" rx="1" fill="#a17f47"></rect><rect x="1.6" y="6.5" width="6.8" height="4.8" fill="#b08c4e"></rect><rect x="4.2" y="7.5" width="1.6" height="2.8" fill="#8a8a8a"></rect></svg>
<span class="t" style="top: 376.5px; font-size: 13px; color: rgb(102, 102, 102); left: 573.3px; transform: scaleX(0.94);">Auto Approve</span>
<svg style="left:478.5px;top:434.5px" width="10" height="13" viewBox="0 0 10 13"><path d="M2.3 6V3.9a2.7 2.7 0 0 1 5.4 0V6" fill="none" stroke="#858585" stroke-width="1.5"></path><rect x=".6" y="5.4" width="8.8" height="7" rx="1" fill="#a17f47"></rect><rect x="1.6" y="6.5" width="6.8" height="4.8" fill="#b08c4e"></rect><rect x="4.2" y="7.5" width="1.6" height="2.8" fill="#8a8a8a"></rect></svg>
<span class="t" style="top: 432.9px; font-size: 13px; color: rgb(102, 102, 102); left: 573.3px; transform: scaleX(0.94);">Prevent</span>
<span class="t" style="top: 490px; font-size: 13px; color: rgb(102, 102, 102); left: 517.3px; transform: scaleX(0.9);">1</span>
<span class="t" style="top: 490px; font-size: 13px; color: rgb(102, 102, 102); left: 573.3px; transform: scaleX(0.94);">Set</span>
<span class="t" style="top: 546.8px; font-size: 13px; color: rgb(102, 102, 102); left: 517.3px; transform: scaleX(0.9);">2</span>
<span class="t" style="top: 546.8px; font-size: 13px; color: rgb(102, 102, 102); left: 573.3px; transform: scaleX(0.94);">Set</span>
<span class="t" style="top: 579.9px; font-size: 13px; color: rgb(102, 102, 102); left: 517.3px; transform: scaleX(0.9);">3</span>
<span class="t" style="top: 579.9px; font-size: 13px; color: rgb(102, 102, 102); left: 573.3px; transform: scaleX(0.94);">Cr</span>
<span class="t" style="top: 612.9px; font-size: 13px; color: rgb(102, 102, 102); left: 517.3px; transform: scaleX(0.9);">4</span>
<span class="t" style="top: 612.9px; font-size: 13px; color: rgb(102, 102, 102); left: 573.3px; transform: scaleX(0.94);">Pr</span></div>
<div id="er"></div><div id="erc"><span class="t" style="top: 170.95px; font-size: 16.5px; color: rgb(0, 0, 0); font-weight: 700; left: 602.8px; transform: scaleX(0.927);">Edit Rule</span>
<svg style="left:1185px;top:170px" width="17" height="21" viewBox="0 0 17 21"><circle cx="7.2" cy="4.1" r="3.5" fill="#8c8c8c"></circle><path d="M1 17.6V10a1 1 0 0 1 1-1h3.6a1 1 0 0 1 1 1v7.6z" fill="#7b7b7b"></path><path d="M8.4 9h3.2a1 1 0 0 1 1 1v1.4H8.4z" fill="#9a9a9a"></path><circle cx="11.8" cy="15.8" r="4.7" fill="#fff"></circle><circle cx="11.8" cy="15.8" r="3.5" fill="#f3f3f3" stroke="#858585" stroke-width="1.3"></circle><path d="M10.5 14.7a1.35 1.35 0 1 1 2 1.2c-.5.3-.7.6-.7 1.1" stroke="#707070" stroke-width="1.25" fill="none"></path><circle cx="11.8" cy="18" r=".7" fill="#707070"></circle></svg>
<div class="b" style="left:1210px;top:166px;width:1px;height:28.5px;background:#e4e6e8;"></div>
<div class="b" style="left:1222.2px;top:168.2px;width:34.6px;height:27.4px;background:#ebedef;border-radius:3.5px;"></div><span class="t c" style="top: 173.2px; font-size: 13px; color: rgb(0, 0, 0); font-weight: 700; left: 1239.5px; transform: translateX(-50%) scaleX(0.912);"><span style="text-decoration:underline;text-decoration-thickness:1px;text-underline-offset:1px">O</span>K</span>
<div class="b" style="left:1265px;top:168.2px;width:55px;height:27.4px;background:#ebedef;border-radius:3.5px;"></div><span class="t c" style="top: 173.2px; font-size: 13px; color: rgb(0, 0, 0); font-weight: 700; left: 1292.5px; transform: translateX(-50%) scaleX(0.894);"><span style="text-decoration:underline;text-decoration-thickness:1px;text-underline-offset:1px">C</span>ancel</span>
<span class="t r" style="top: 224.2px; font-size: 13px; color: rgb(56, 56, 56); font-weight: 700; right: 1226.8px; transform: scaleX(0.905);">Rule</span><svg style="left:655.3000000000001px;top:223.1px" width="8" height="8" viewBox="-4 -4 8 8" stroke="#1f6fb3" stroke-width="1.5" stroke-linecap="butt"><path d="M0-3.7V3.7M-3.2-1.85L3.2 1.85M-3.2 1.85L3.2-1.85"></path></svg>
<div class="b" style="left:700.2px;top:218px;width:348.6px;height:27.5px;background:#fbfcfe;border:1px solid #d6dade;border-radius:2.5px;"></div><span class="t" style="top: 224.05px; font-size: 13px; color: rgb(51, 51, 51); left: 707.3px; transform: scaleX(0.929);">Prevent Reconciliation Submission</span><svg style="left:1028.0000000000002px;top:228.65px" width="11" height="7" viewBox="0 0 11 7" fill="none" stroke="#585858" stroke-width="1.25"><path d="M0.9 0.9L5.5 5.6L10.1 0.9"></path></svg>
<span class="t r" style="top: 260.1px; font-size: 13px; color: rgb(56, 56, 56); font-weight: 700; right: 1226.8px; transform: scaleX(0.916);">Description</span>
<div class="b" style="left:700.2px;top:254.2px;width:576.5px;height:27.4px;background:#fbfcfe;border:1px solid #d6dade;border-radius:2.5px;"></div>
<span class="t" style="top: 260.9px; font-size: 13px; color: rgb(51, 51, 51); left: 706px; transform: scaleX(0.934);">Prevent Submit if Journal Entry Details are Not Fully Populated</span>
<span class="t r" style="top: 297.3px; font-size: 13px; color: rgb(56, 56, 56); font-weight: 700; right: 1226.8px; transform: scaleX(0.918);">Message to</span>
<span class="t r" style="top: 313.4px; font-size: 13px; color: rgb(56, 56, 56); font-weight: 700; right: 1226.8px; transform: scaleX(0.922);">Preparer</span>
<div class="b" style="left:700.2px;top:290.4px;width:608.6px;height:39.5px;background:#fbfcfe;border:1px solid #d6dade;border-radius:2.5px;"></div>
<span class="t" style="top: 297.1px; font-size: 13px; color: rgb(51, 51, 51); left: 706px; transform: scaleX(0.941);">Please review the Journal Entry Action Plan details for missing information.</span>
<svg style="left:1297.5px;top:318.5px" width="10" height="10" viewBox="0 0 10 10" stroke="#555" stroke-width="1"><path d="M1.2 9.2L9.2 1.2M5.4 9.2L9.2 5.4"></path></svg>
<div class="b" style="left:799.0px;top:348.8px;width:15.6px;height:15.6px;border:1px solid #adb5bd;border-radius:50%;background:#fdfdfe;"></div><div class="b" style="left:802.4px;top:352.20000000000005px;width:8.8px;height:8.8px;border-radius:50%;background:#0a6fc9;"></div>
<span class="t" style="top: 349.4px; font-size: 13px; color: rgb(51, 51, 51); left: 821.5px; transform: scaleX(0.902);">Create Filter</span>
<div class="b" style="left:901.0px;top:348.8px;width:15.6px;height:15.6px;border:1px solid #adb5bd;border-radius:50%;background:#fdfdfe;"></div>
<span class="t" style="top: 349.4px; font-size: 13px; color: rgb(51, 51, 51); left: 923.5px; transform: scaleX(0.895);">Use Saved Filter</span>
<span class="t" style="top: 381.2px; font-size: 18px; color: rgb(43, 43, 43); left: 645.2px; transform: scaleX(0.923);">Filter Definition</span>
<svg style="left:654px;top:418.2px" width="9" height="8" viewBox="0 0 9 8"><path d="M8.8 0V7.6H0z" fill="#8a8a8a"></path></svg>
<span class="t" style="top: 415.2px; font-size: 13px; color: rgb(42, 109, 168); left: 670.2px; transform: scaleX(0.931);">Filter Criteria</span>
<div class="b" style="left:694px;top:441.6px;width:265px;height:11.6px;background:#d5e8f8;"></div>
<span class="t" style="top: 440.3px; font-size: 13px; color: rgb(24, 90, 153); font-weight: 700; left: 694.8px; transform: scaleX(0.911);">Journal Entry Requirements Met? equals False</span>
<div class="b" style="left:647px;top:536.8px;width:112.8px;height:27.6px;background:linear-gradient(#f2f4f6,#e2e6e9);border:1px solid #c2cad2;border-radius:3.5px;box-shadow:0 1px 0 rgba(0,0,0,.04);"></div><span class="t c" style="top: 543.1px; font-size: 13px; color: rgb(0, 0, 0); font-weight: 700; left: 703.4px; transform: translateX(-50%) scaleX(0.912);">Create Condition</span>
<div class="b" style="left:887.2px;top:536.8px;width:151.3px;height:27.6px;background:linear-gradient(#f2f4f6,#e2e6e9);border:1px solid #c2cad2;border-radius:3.5px;box-shadow:0 1px 0 rgba(0,0,0,.04);"></div><span class="t c" style="top: 543.1px; font-size: 13px; color: rgb(0, 0, 0); font-weight: 700; left: 962.85px; transform: translateX(-50%) scaleX(0.911);">Create Condition Group</span>
<div class="b" style="left:1203.2px;top:536.8px;width:53.3px;height:27.6px;background:linear-gradient(#f2f4f6,#e2e6e9);border:1px solid #c2cad2;border-radius:3.5px;box-shadow:0 1px 0 rgba(0,0,0,.04);"></div><span class="t c" style="top: 543.1px; font-size: 13px; color: rgb(0, 0, 0); font-weight: 700; left: 1229.85px; transform: translateX(-50%) scaleX(0.93);">Delete</span>
<div class="b" style="left:645px;top:570px;width:669.8px;height:1px;background:#d6e0e8;"></div>
<span class="t" style="top: 579.2px; font-size: 18px; color: rgb(51, 51, 51); left: 645.2px; transform: scaleX(0.92);">Condition</span>
<span class="t r" style="top: 622.3px; font-size: 13px; color: rgb(56, 56, 56); font-weight: 700; right: 1199.2px; transform: scaleX(0.914);">Conjunction</span>
<div class="b" style="left:728.2px;top:616.2px;width:168.6px;height:27.4px;background:#e6e7e8;border-radius:2px;"></div><svg style="left:876.0000000000001px;top:626.8000000000001px" width="11" height="7" viewBox="0 0 11 7" fill="none" stroke="#585858" stroke-width="1.25"><path d="M0.9 0.9L5.5 5.6L10.1 0.9"></path></svg>
<span class="t r" style="top: 658.1px; font-size: 13px; color: rgb(56, 56, 56); font-weight: 700; right: 1199.2px; transform: scaleX(0.88);">Source</span><svg style="left:669.6px;top:657.0px" width="8" height="8" viewBox="-4 -4 8 8" stroke="#1f6fb3" stroke-width="1.5" stroke-linecap="butt"><path d="M0-3.7V3.7M-3.2-1.85L3.2 1.85M-3.2 1.85L3.2-1.85"></path></svg>
<div class="b" style="left:728.2px;top:652.2px;width:168.6px;height:27.4px;background:#fbfcfe;border:1px solid #d6dade;border-radius:2.5px;"></div><span class="t" style="top: 658.2px; font-size: 13px; color: rgb(51, 51, 51); left: 735.3px; transform: scaleX(0.934);">Transaction</span><svg style="left:876.0000000000001px;top:662.8000000000001px" width="11" height="7" viewBox="0 0 11 7" fill="none" stroke="#585858" stroke-width="1.25"><path d="M0.9 0.9L5.5 5.6L10.1 0.9"></path></svg>
<span class="t r" style="top: 694.3px; font-size: 13px; color: rgb(56, 56, 56); font-weight: 700; right: 1199.2px; transform: scaleX(0.941);">Attribute</span><svg style="left:657.4px;top:693.1999999999999px" width="8" height="8" viewBox="-4 -4 8 8" stroke="#1f6fb3" stroke-width="1.5" stroke-linecap="butt"><path d="M0-3.7V3.7M-3.2-1.85L3.2 1.85M-3.2 1.85L3.2-1.85"></path></svg>
<div class="b" style="left:728.2px;top:688.2px;width:398.4px;height:27.4px;background:#fbfcfe;border:1px solid #d6dade;border-radius:2.5px;"></div><span class="t" style="top: 694.2px; font-size: 13px; color: rgb(51, 51, 51); left: 735.3px; transform: scaleX(0.934);">Journal Entry Requirements Met?</span><svg style="left:1105.8px;top:698.8000000000001px" width="11" height="7" viewBox="0 0 11 7" fill="none" stroke="#585858" stroke-width="1.25"><path d="M0.9 0.9L5.5 5.6L10.1 0.9"></path></svg>
<span class="t r" style="top: 730.2px; font-size: 13px; color: rgb(56, 56, 56); font-weight: 700; right: 1199.2px; transform: scaleX(0.911);">Operand</span><svg style="left:659.6999999999999px;top:729.1px" width="8" height="8" viewBox="-4 -4 8 8" stroke="#1f6fb3" stroke-width="1.5" stroke-linecap="butt"><path d="M0-3.7V3.7M-3.2-1.85L3.2 1.85M-3.2 1.85L3.2-1.85"></path></svg>
<div class="b" style="left:728.2px;top:724.3px;width:168.6px;height:27.4px;background:#fbfcfe;border:1px solid #d6dade;border-radius:2.5px;"></div><span class="t" style="top: 730.3px; font-size: 13px; color: rgb(51, 51, 51); left: 735.3px; transform: scaleX(0.896);">Equals</span><svg style="left:876.0000000000001px;top:734.9px" width="11" height="7" viewBox="0 0 11 7" fill="none" stroke="#585858" stroke-width="1.25"><path d="M0.9 0.9L5.5 5.6L10.1 0.9"></path></svg>
<span class="t r" style="top: 766.4px; font-size: 13px; color: rgb(56, 56, 56); font-weight: 700; right: 1199.2px; transform: scaleX(0.907);">Value</span><svg style="left:677.6px;top:765.3px" width="8" height="8" viewBox="-4 -4 8 8" stroke="#1f6fb3" stroke-width="1.5" stroke-linecap="butt"><path d="M0-3.7V3.7M-3.2-1.85L3.2 1.85M-3.2 1.85L3.2-1.85"></path></svg>
<div class="b" style="left:728.2px;top:760.3px;width:168.6px;height:27.4px;background:#fbfcfe;border:1px solid #d6dade;border-radius:2.5px;"></div><span class="t" style="top: 766.3px; font-size: 13px; color: rgb(51, 51, 51); left: 735.3px; transform: scaleX(0.849);">False</span><svg style="left:876.0000000000001px;top:770.9px" width="11" height="7" viewBox="0 0 11 7" fill="none" stroke="#585858" stroke-width="1.25"><path d="M0.9 0.9L5.5 5.6L10.1 0.9"></path></svg></div>
</body></html>
